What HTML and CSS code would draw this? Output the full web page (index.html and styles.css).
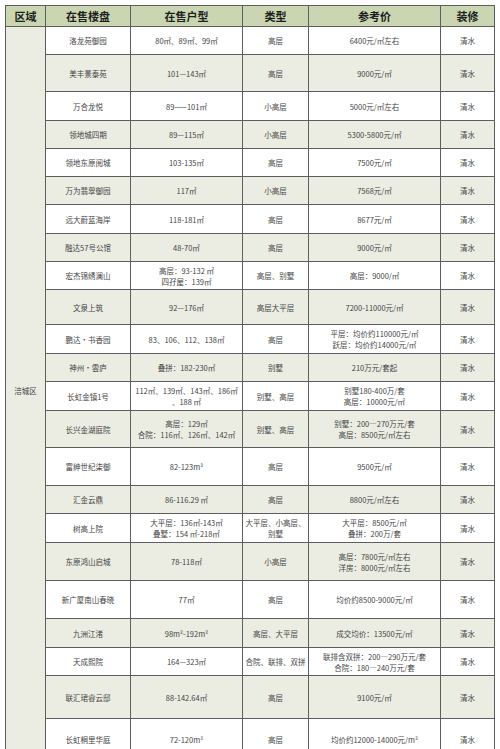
FILE: index.html
```html
<!DOCTYPE html>
<html lang="zh">
<head>
<meta charset="utf-8">
<link rel="stylesheet" href="styles.css">
</head>
<body>
<div class="page">
<table class="grid">
<colgroup>
<col class="c1"><col class="c2"><col class="c3"><col class="c4"><col class="c5"><col class="c6">
</colgroup>
<thead>
<tr class="head"><th>区域</th><th>在售楼盘</th><th>在售户型</th><th>类型</th><th>参考价</th><th>装修</th></tr>
</thead>
<tbody>
<tr class="h28"><td class="region" rowspan="23">涪城区</td><td>洛龙苑御园</td><td>80㎡、89㎡、99㎡</td><td>高层</td><td>6400元/㎡左右</td><td>清水</td></tr>
<tr class="h37 alt"><td>美丰景泰苑</td><td>101—143㎡</td><td>高层</td><td>9000元/㎡</td><td>清水</td></tr>
<tr class="h29"><td>万合龙悦</td><td>89——101㎡</td><td>小高层</td><td>5000元/㎡左右</td><td>清水</td></tr>
<tr class="h28 alt"><td>领地城四期</td><td>89—115㎡</td><td>小高层</td><td>5300-5800元/㎡</td><td>清水</td></tr>
<tr class="h28"><td>领地东原阅城</td><td>103-135㎡</td><td>高层</td><td>7500元/㎡</td><td>清水</td></tr>
<tr class="h28 alt"><td>万为翡翠御园</td><td>117㎡</td><td>小高层</td><td>7568元/㎡</td><td>清水</td></tr>
<tr class="h29"><td>远大蔚蓝海岸</td><td>118-181㎡</td><td>高层</td><td>8677元/㎡</td><td>清水</td></tr>
<tr class="h28 alt"><td>融达57号公馆</td><td>48-70㎡</td><td>高层</td><td>9000元/㎡</td><td>清水</td></tr>
<tr class="h28"><td>宏杰锦绣澜山</td><td>高层：93-132 ㎡<br>四孖屋：139㎡</td><td>高层、别墅</td><td>高层：9000/㎡</td><td>清水</td></tr>
<tr class="h35 alt"><td>文泉上筑</td><td>92—176㎡</td><td>高层大平层</td><td>7200-11000元/㎡</td><td>清水</td></tr>
<tr class="h29"><td>鹏达·书香园</td><td>83、106、112、138㎡</td><td>高层</td><td>平层：均价约110000元/㎡<br>跃层：均价约14000元/㎡</td><td>清水</td></tr>
<tr class="h28 alt"><td>神州·雲庐</td><td>叠拼：182-230㎡</td><td>别墅</td><td>210万元/套起</td><td>清水</td></tr>
<tr class="h29"><td>长虹金镇1号</td><td>112㎡、139㎡、143㎡、186㎡<br>、188 ㎡</td><td>别墅、高层</td><td>别墅180-400万/套<br>高层：10000元/㎡</td><td>清水</td></tr>
<tr class="h37 alt"><td>长兴金湖庭院</td><td>高层：129㎡<br>合院：116㎡、126㎡、142㎡</td><td>别墅、高层</td><td>别墅：200—270万元/套<br>高层：8500元/㎡左右</td><td>清水</td></tr>
<tr class="h38"><td>富绅世纪柒御</td><td>82-123m²</td><td>高层</td><td>9500元/㎡</td><td>清水</td></tr>
<tr class="h28 alt"><td>汇金云鼎</td><td>86-116.29 ㎡</td><td>高层</td><td>8800元/㎡左右</td><td>清水</td></tr>
<tr class="h29"><td>树高上院</td><td>大平层：136㎡-143㎡<br>叠墅：154 ㎡-218㎡</td><td>大平层、小高层、<br>别墅</td><td>大平层：8500元/㎡<br>叠拼：200万/套</td><td>清水</td></tr>
<tr class="h38 alt"><td>东原鸿山启城</td><td>78-118㎡</td><td>小高层</td><td>高层：7800元/㎡左右<br>洋房：8000元/㎡左右</td><td>清水</td></tr>
<tr class="h38"><td>新广厦南山春晓</td><td>77㎡</td><td>高层</td><td>均价约8500-9000元/㎡</td><td>清水</td></tr>
<tr class="h29 alt"><td>九洲江渚</td><td>98m²-192m²</td><td>高层、大平层</td><td>成交均价：13500元/㎡</td><td>清水</td></tr>
<tr class="h28"><td>天成熙院</td><td>164—323㎡</td><td>合院、联排、双拼</td><td>联排含双拼：200—290万元/套<br>合院：180—240万元/套</td><td>清水</td></tr>
<tr class="h43 alt"><td>联汇珺睿云邸</td><td>88-142.64㎡</td><td>高层</td><td>9100元/㎡</td><td>清水</td></tr>
<tr class="hlast"><td>长虹桐里华庭</td><td>72-120m²</td><td>高层</td><td>均价约12000-14000元/m²</td><td>清水</td></tr>
</tbody>
</table>
</div>
</body>
</html>
```

FILE: styles.css
```css
html, body {
  margin: 0;
  padding: 0;
  background: #ffffff;
}
.page {
  padding: 5px 0 0 5px;
}
.grid {
  border-collapse: collapse;
  table-layout: fixed;
  width: 489px;
  font-family: "Noto Sans CJK SC", "Noto Sans", sans-serif;
  font-size: 7.5px;
  line-height: 11px;
  color: #444444;
  border: 1px solid #6f6f6f;
}
.c1 { width: 40px; }
.c2 { width: 85px; }
.c3 { width: 112px; }
.c4 { width: 66px; }
.c5 { width: 132px; }
.c6 { width: 54px; }
.grid th, .grid td {
  border: 1px solid #5e5e5e;
  text-align: center;
  vertical-align: middle;
  padding: 0 1px;
  overflow: hidden;
  white-space: nowrap;
}
.head th {
  height: 20px;
  background: #c9d6b1;
  color: #1e1e1e;
  font-size: 11px;
  font-weight: 700;
  line-height: 14px;
}
.alt td {
  background: #ebede3;
}
.grid td.region {
  background: #ebede3;
  vertical-align: middle;
  padding-bottom: 6px;
}
.h28 td { height: 27px; }
.h29 td { height: 28px; }
.h35 td { height: 34px; }
.h37 td { height: 36px; }
.h38 td { height: 37px; }
.h43 td { height: 42px; }
.hlast td { height: 40px; }
.grid td.region { height: auto; }
```
